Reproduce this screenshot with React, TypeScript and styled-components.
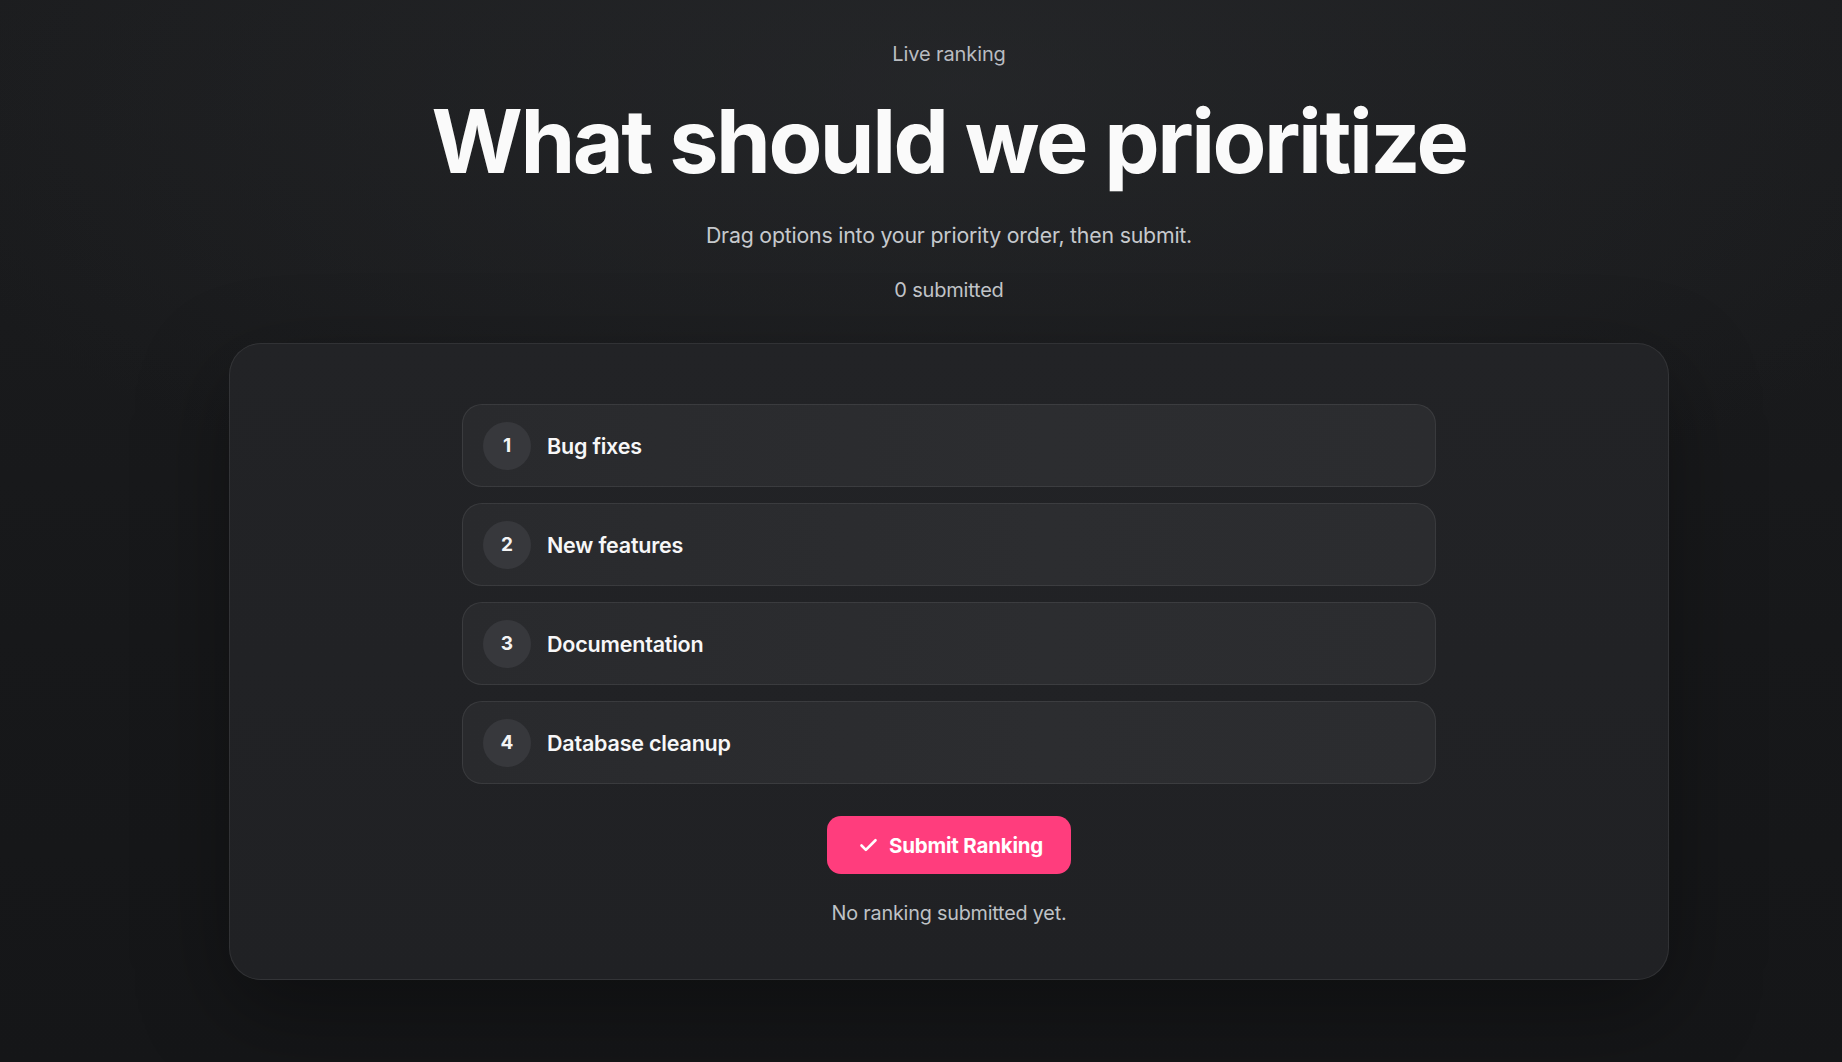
import React, { useState } from 'react';
import styled, { createGlobalStyle } from 'styled-components';

const GlobalStyle = createGlobalStyle`
  * { box-sizing: border-box; }
  html, body {
    margin: 0;
    padding: 0;
    background: #161719;
  }
  body {
    font-family: Inter, "Noto Sans", "Liberation Sans", sans-serif;
    color: #ffffff;
  }
`;

interface RankOption {
  id: string;
  label: string;
}

const PageContainer = styled.div`
  width: 100%;
  min-height: 100vh;
  padding: 42px 0 80px 56px;
  background:
    radial-gradient(ellipse 60% 45% at 52% 8%, rgba(44, 46, 49, 0.55) 0%, rgba(44, 46, 49, 0) 100%),
    linear-gradient(180deg, #1b1c1e 0%, #17181a 60%, #151618 100%);
  display: flex;
  flex-direction: column;
  align-items: center;
`;

const Eyebrow = styled.div`
  font-size: 20px;
  line-height: 24px;
  color: #b9bcc1;
  letter-spacing: -0.1px;
`;

const Title = styled.h1`
  margin: 27px 0 0;
  font-size: 88px;
  line-height: 96px;
  font-weight: 700;
  letter-spacing: -2.5px;
  color: #fafafa;
`;

const Subtitle = styled.p`
  margin: 32px 0 0;
  font-size: 21.3px;
  line-height: 28px;
  color: #c6c9cd;
  letter-spacing: -0.2px;
`;

const Counter = styled.div`
  margin-top: 29px;
  font-size: 20px;
  line-height: 24px;
  color: #c3c6ca;
  letter-spacing: -0.2px;
`;

const Card = styled.section`
  margin-top: 41px;
  width: 1440px;
  padding: 60px 40px 53px;
  background: linear-gradient(180deg, #222326 0%, #202124 100%);
  border: 1px solid rgba(255, 255, 255, 0.08);
  border-radius: 32px;
  box-shadow: 0 30px 90px rgba(0, 0, 0, 0.35);
  display: flex;
  flex-direction: column;
  align-items: center;
`;

const OptionList = styled.ol`
  list-style: none;
  margin: 0;
  padding: 0;
  width: 974px;
  display: flex;
  flex-direction: column;
  gap: 16px;
`;

const OptionRow = styled.li<{ $dragging?: boolean }>`
  height: 83px;
  display: flex;
  align-items: center;
  gap: 16px;
  padding: 0 20px;
  background: linear-gradient(90deg, #292a2d 0%, #2c2d30 60%, #2b2c2f 100%);
  border: 1px solid rgba(255, 255, 255, 0.08);
  border-radius: 20px;
  cursor: grab;
  opacity: ${props => (props.$dragging ? 0.5 : 1)};
`;

const RankBadge = styled.span`
  width: 48px;
  height: 48px;
  border-radius: 50%;
  background: #37383c;
  display: flex;
  align-items: center;
  justify-content: center;
  font-size: 19px;
  font-weight: 700;
  color: #f4f4f5;
`;

const OptionLabel = styled.span`
  font-size: 21.5px;
  font-weight: 600;
  color: #f7f7f8;
  letter-spacing: -0.2px;
`;

const SubmitButton = styled.button`
  margin-top: 32px;
  height: 58px;
  padding: 0 28px 0 31px;
  display: flex;
  align-items: center;
  gap: 10px;
  background: #ff3d7d;
  border: none;
  border-radius: 14px;
  color: #ffffff;
  font-family: inherit;
  font-size: 20.5px;
  font-weight: 700;
  letter-spacing: -0.2px;
  cursor: pointer;

  &:hover {
    background: #ff4f8a;
  }
`;

const StatusText = styled.p`
  margin: 26px 0 0;
  font-size: 19.8px;
  line-height: 26px;
  color: #bfc2c6;
  letter-spacing: -0.2px;
`;

const CheckIcon = () => (
  <svg width="21" height="21" viewBox="0 0 24 24" fill="none" stroke="currentColor" strokeWidth="3" strokeLinecap="round" strokeLinejoin="round">
    <path d="M20 6 9 17l-5-5" />
  </svg>
);

const initialOptions: RankOption[] = [
  { id: 'bugs', label: 'Bug fixes' },
  { id: 'features', label: 'New features' },
  { id: 'docs', label: 'Documentation' },
  { id: 'db', label: 'Database cleanup' },
];

export default function App() {
  const [options, setOptions] = useState<RankOption[]>(initialOptions);
  const [dragIndex, setDragIndex] = useState<number | null>(null);
  const [submitted, setSubmitted] = useState(0);

  const handleDrop = (index: number) => {
    if (dragIndex === null || dragIndex === index) return;
    const next = [...options];
    const [moved] = next.splice(dragIndex, 1);
    next.splice(index, 0, moved);
    setOptions(next);
    setDragIndex(null);
  };

  return (
    <>
      <GlobalStyle />
      <PageContainer>
        <Eyebrow>Live ranking</Eyebrow>
        <Title>What should we prioritize</Title>
        <Subtitle>Drag options into your priority order, then submit.</Subtitle>
        <Counter>{submitted} submitted</Counter>

        <Card>
          <OptionList>
            {options.map((option, index) => (
              <OptionRow
                key={option.id}
                draggable
                $dragging={dragIndex === index}
                onDragStart={() => setDragIndex(index)}
                onDragOver={e => e.preventDefault()}
                onDrop={() => handleDrop(index)}
                onDragEnd={() => setDragIndex(null)}
              >
                <RankBadge>{index + 1}</RankBadge>
                <OptionLabel>{option.label}</OptionLabel>
              </OptionRow>
            ))}
          </OptionList>

          <SubmitButton onClick={() => setSubmitted(submitted + 1)}>
            <CheckIcon />
            Submit Ranking
          </SubmitButton>
          <StatusText>
            {submitted === 0 ? 'No ranking submitted yet.' : 'Ranking submitted.'}
          </StatusText>
        </Card>
      </PageContainer>
    </>
  );
}
